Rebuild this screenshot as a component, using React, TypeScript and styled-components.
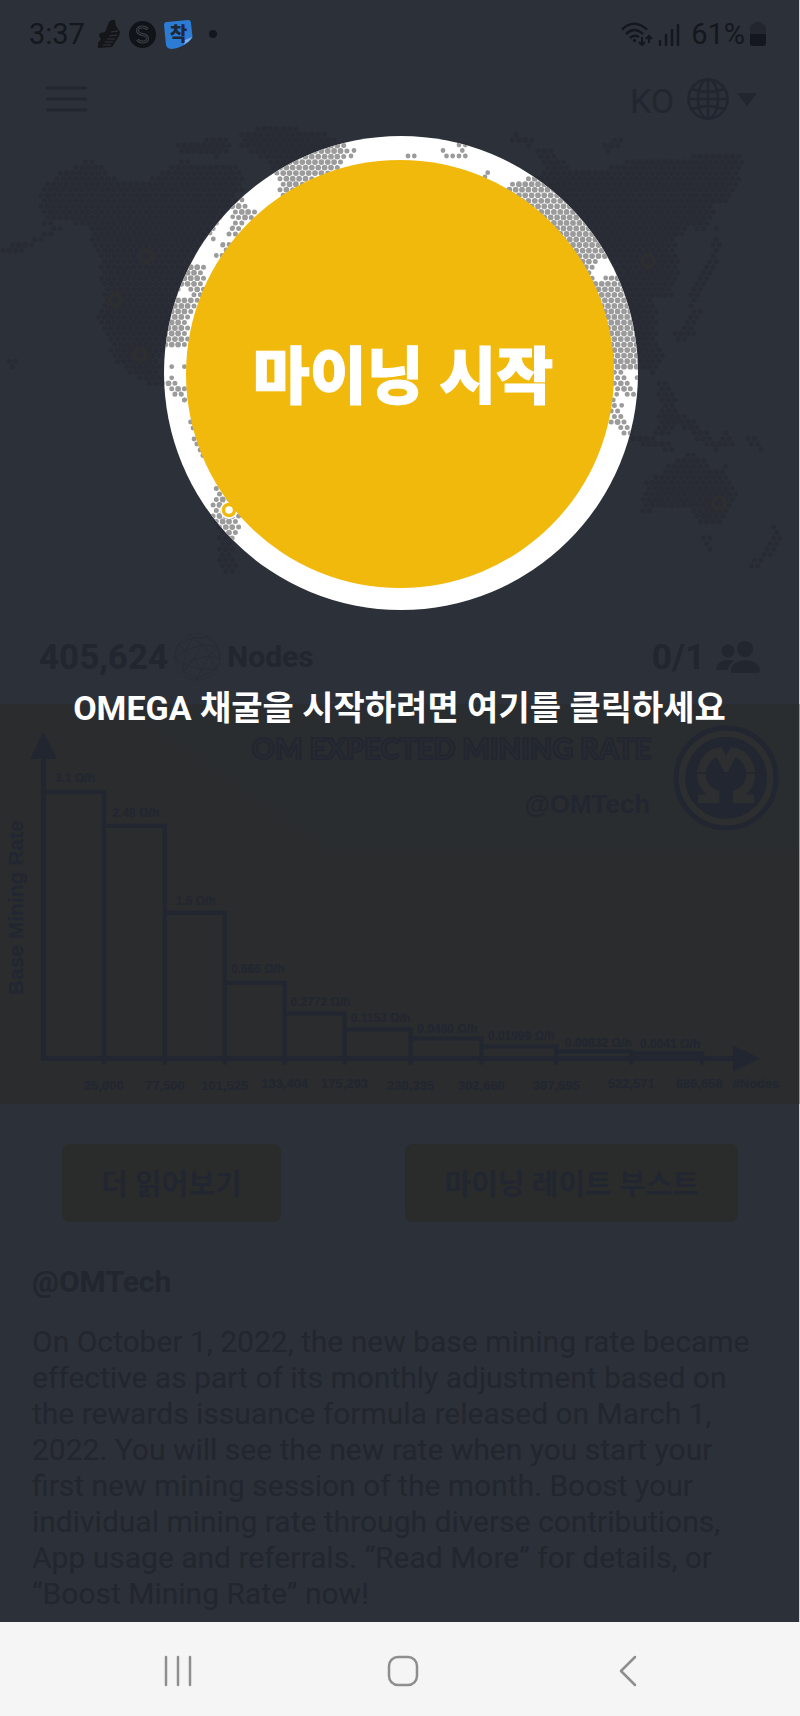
import React from "react";
import styled, { createGlobalStyle } from "styled-components";

const color = {
  page: "#2c3038",
  ink: "#22262e",
  navy: "#212631",
  status: "#14171d",
  mapDot: "#282b34",
  ringDot: "#9b9b9b",
  gold: "#f0b90b",
  panel: "#2a2d2f",
  buttonFill: "#2a2c2b",
  nav: "#f5f5f5",
  navIcon: "#8e8e8e",
};

const fonts = `Roboto, "Noto Sans CJK KR", sans-serif`;

const GlobalStyle = createGlobalStyle`
  *, *::before, *::after { box-sizing: border-box; }
  body { margin: 0; background: ${color.page}; font-family: ${fonts}; }
  button, select { font: inherit; color: inherit; border: 0; background: none; padding: 0; margin: 0; }
  svg { display: block; }
`;

const Page = styled.div`
  min-height: 100vh;
  display: flex;
  flex-direction: column;
  overflow-x: hidden;
  color: ${color.ink};
`;

const Content = styled.main`
  flex: 1;
  display: flex;
  flex-direction: column;
`;

const Section = styled.section<{ $edge?: string }>`
  border-right: 1px solid ${(p) => p.$edge ?? "#d4d5d7"};
`;

const StatusBar = styled(Section)`
  height: 68px;
  padding: 0 33px 0 29px;
  display: flex;
  align-items: center;
  justify-content: space-between;
  color: ${color.status};
  font-size: 29px;
  line-height: 32px;
`;

const StatusGroup = styled.div<{ $gap: number }>`
  display: flex;
  align-items: center;
  gap: ${(p) => p.$gap}px;
`;

const MoreNotifications = styled.span`
  padding-left: 8px;
`;

const Percent = styled.span`
  padding-left: 6px;
`;

const Header = styled(Section)`
  height: 62px;
  padding: 0 42px 0 46px;
  display: flex;
  align-items: center;
  justify-content: space-between;
`;

const IconButton = styled.button`
  display: flex;
  align-items: center;
  justify-content: center;
  cursor: pointer;
`;

const Language = styled.label`
  display: flex;
  align-items: center;
  gap: 8px;
  color: ${color.navy};
`;

const LanguageSelect = styled.select`
  appearance: none;
  width: 49px;
  padding-top: 4px;
  font-size: 34px;
  line-height: 40px;
  outline: none;
`;

const Hero = styled(Section)`
  display: grid;
  justify-items: center;
  align-items: center;
  height: 488px;
  > * { grid-area: 1 / 1; }
`;

const WorldMap = styled.svg`
  width: 800px;
  height: 488px;
  overflow: visible;
`;

const StartButton = styled.button`
  z-index: 1;
  width: 428px;
  height: 428px;
  padding: 8px 0 0 6px;
  border-radius: 50%;
  background: ${color.gold};
  color: #fff;
  font-size: 62px;
  line-height: 72px;
  font-weight: 900;
  -webkit-text-stroke: 1px #fff;
  cursor: pointer;
`;

const CityPin = styled.svg`
  z-index: 2;
  width: 800px;
  height: 488px;
  pointer-events: none;
`;

const Stats = styled(Section)`
  position: relative;
  height: 86px;
  padding: 0 39px 8px 39px;
  display: flex;
  align-items: center;
  justify-content: space-between;
  font-weight: 700;
`;

const StatGroup = styled.div<{ $gap: number }>`
  display: flex;
  align-items: center;
  gap: ${(p) => p.$gap}px;
`;

const StatValue = styled.span`
  padding-top: 2px;
  font-size: 35px;
  line-height: 40px;
`;

const StatLabel = styled.span`
  font-size: 30px;
  line-height: 36px;
`;

const Hint = styled.p`
  position: absolute;
  left: 0;
  right: 0;
  bottom: -26px;
  z-index: 2;
  margin: 0;
  text-align: center;
  white-space: nowrap;
  color: #fff;
  font-size: 34px;
  line-height: 44px;
  font-weight: 700;
`;

const ChartPanel = styled(Section)`
  background: ${color.panel};
`;

const Chart = styled.svg`
  width: 100%;
  height: auto;
  font-family: "Liberation Sans", sans-serif;
  font-weight: 700;
  font-size: 13px;
  fill: ${color.navy};
`;

const Actions = styled(Section)`
  display: flex;
  justify-content: space-between;
  padding: 40px 61px 0 62px;
`;

const ActionButton = styled.button`
  height: 78px;
  padding: 4px 39px 0;
  border-radius: 8px;
  background: ${color.buttonFill};
  font-size: 29px;
  line-height: 36px;
  font-weight: 700;
  color: ${color.navy};
  cursor: pointer;
`;

const Article = styled(Section)`
  flex: 1;
  padding: 42px 32px 0 32px;
  font-size: 30px;
  line-height: 36px;
`;

const Author = styled.h2`
  margin: 0 0 24px;
  font-size: 30px;
  line-height: 36px;
  font-weight: 700;
`;

const Body = styled.p`
  margin: 0;
`;

const NavBar = styled.nav`
  height: 94px;
  padding: 4px 60px 0 66px;
  display: grid;
  grid-template-columns: repeat(3, 1fr);
  background: ${color.nav};
  color: ${color.navIcon};
`;

/* ---- world map: land areas filled with a hexagonal grid of dots ---- */

type Point = [number, number];

const land: Point[][] = [
  [[0, 246], [30, 242], [55, 225], [62, 228], [45, 240], [25, 251], [0, 253]],
  [[40, 185], [62, 172], [88, 158], [100, 163], [118, 180], [145, 184], [155, 175], [185, 160], [205, 165], [235, 165], [245, 185], [235, 200],
    [250, 207], [256, 212], [245, 225], [236, 235], [226, 245], [206, 262], [203, 272], [206, 285], [198, 300], [192, 315], [188, 332], [188, 346],
    [163, 347], [160, 362], [164, 384], [150, 386], [128, 372], [112, 358], [108, 342], [95, 318], [104, 300], [100, 265], [90, 240], [90, 224],
    [60, 222], [42, 224], [40, 200]],
  [[240, 133], [262, 127], [285, 126], [320, 132], [350, 146], [345, 165], [322, 176], [300, 188], [284, 198], [278, 186], [276, 172], [262, 160], [240, 145]],
  [[172, 144], [200, 140], [225, 138], [232, 150], [215, 158], [195, 152], [178, 156]],
  [[163, 382], [172, 382], [187, 388], [187, 401], [180, 400]],
  [[214, 486], [222, 490], [236, 506], [242, 516], [238, 532], [232, 546], [238, 562], [236, 577], [222, 570], [216, 550], [219, 530], [212, 515]],
  [[8, 358], [17, 358], [16, 372], [10, 370]],
  [[510, 182], [522, 183], [528, 174], [540, 178], [545, 165], [535, 150], [550, 150], [565, 160], [570, 170], [600, 170], [630, 160], [655, 158],
    [690, 157], [700, 154], [742, 154], [742, 170], [735, 190], [730, 205], [716, 205], [705, 236], [690, 226], [675, 240], [680, 270], [672, 300],
    [655, 300], [658, 340], [664, 360], [654, 378], [640, 364], [637, 368], [612, 371], [500, 300], [490, 200]],
  [[508, 128], [516, 130], [520, 140], [535, 138], [532, 146], [514, 144]],
  [[602, 144], [615, 138], [630, 138], [618, 146], [608, 152]],
  [[716, 226], [722, 240], [718, 262], [708, 280], [700, 296], [690, 306], [688, 298], [704, 272], [712, 250]],
  [[690, 300], [702, 312], [694, 334], [682, 342], [672, 336], [688, 322]],
  [[612, 370], [624, 370], [630, 382], [639, 398], [627, 397], [622, 390], [612, 393]],
  [[611, 403], [618, 402], [624, 412], [632, 430], [634, 440], [624, 434], [610, 424]],
  [[658, 382], [668, 382], [680, 412], [700, 425], [716, 440], [730, 428], [736, 446], [716, 450], [696, 440], [680, 424], [664, 438], [652, 432], [660, 412]],
  [[630, 436], [655, 438], [680, 446], [676, 452], [646, 446]],
  [[742, 437], [760, 438], [768, 452], [758, 452]],
  [[640, 508], [646, 482], [668, 466], [686, 454], [704, 456], [716, 470], [726, 462], [732, 488], [738, 496], [728, 516], [714, 526], [700, 524],
    [690, 508], [665, 506], [645, 514]],
  [[702, 536], [714, 536], [712, 550], [706, 548]],
  [[774, 524], [784, 540], [768, 558], [750, 572], [752, 560], [768, 546]],
];

const water: Point[][] = [
  [[186, 268], [209, 234], [229, 209], [235, 214], [233, 220], [226, 240], [206, 264]],
  [[598, 262], [613, 260], [616, 274], [604, 281], [594, 276]],
  [[180, 288], [190, 288], [189, 302], [179, 298]],
];

// Single dots for islands and ragged coasts.
const islets: Point[] = [
  [171.7, 366.7], [184.4, 366.7], [171.7, 377.8], [168.5, 383.3], [175, 394], [181, 394], [184.8, 399.8], [190.5, 422], [193, 428], [194, 439],
  [196.8, 444], [200, 450], [202.8, 455.5], [210, 233], [213.3, 239], [223, 244.5], [229, 244.5], [226, 250], [216.3, 255.5], [222, 255.5],
  [232.7, 216.8], [232.7, 228], [238.7, 205.5], [242, 200], [354, 150.5], [351, 156],
  [408, 156], [414.3, 156], [443, 150.5], [446.5, 156], [452.7, 156], [459, 156], [465.3, 156], [462.3, 150.5], [459, 145], [465.3, 145],
  [487.7, 172.7], [485, 177], [605.7, 278], [612, 278], [637, 377.7], [616.7, 394.3], [613.3, 400], [621.7, 405.3],
];

function inside([x, y]: Point, shape: Point[]) {
  let hit = false;
  for (let i = 0, j = shape.length - 1; i < shape.length; j = i++) {
    const [xi, yi] = shape[i];
    const [xj, yj] = shape[j];
    if (yi > y !== yj > y && x < ((xj - xi) * (y - yi)) / (yj - yi) + xi) hit = !hit;
  }
  return hit;
}

const isLand = (p: Point) => land.some((s) => inside(p, s)) && !water.some((s) => inside(p, s));

const dot = (x: number, y: number, r: number) =>
  `M${(x - r).toFixed(1)} ${y.toFixed(1)}a${r} ${r} 0 1 0 ${2 * r} 0a${r} ${r} 0 1 0 ${-2 * r} 0`;

function buildMap() {
  const stepX = 6.37;
  const stepY = 5.53;
  let d = "";
  for (let row = -44; row < 40; row++) {
    const y = 366.7 + row * stepY;
    const shift = row % 2 === 0 ? 0 : stepX / 2;
    for (let col = -27; col < 98; col++) {
      const x = 171.7 + col * stepX + shift;
      if (!isLand([x, y])) continue;
      const coast = !isLand([x - stepX, y]) || !isLand([x + stepX, y]);
      d += dot(x, y, coast ? 2.5 : 2.9);
    }
  }
  islets.forEach(([x, y]) => (d += dot(x, y, 2.4)));
  return d;
}

const mapPath = buildMap();
const cities: Point[] = [[146, 256], [115, 300], [140, 355], [648, 261], [719, 503]];

const MapDrawing = () => (
  <WorldMap viewBox="0 130 800 488" aria-hidden="true">
    <defs>
      <clipPath id="ring"><circle cx="401" cy="373" r="237" /></clipPath>
    </defs>
    <path d={mapPath} fill={color.mapDot} />
    {cities.map(([x, y]) => (
      <circle key={x} cx={x} cy={y} r="6" fill="none" stroke="#2d2e30" strokeWidth="4" />
    ))}
    <circle cx="401" cy="373" r="237" fill="#fff" />
    <g clipPath="url(#ring)">
      <path d={mapPath} fill={color.ringDot} />
      <circle cx="229" cy="510" r="9" fill="#fff" />
    </g>
  </WorldMap>
);

/* ---- mining rate chart ---- */

const bars = [
  { x: 44, end: 104, top: 792, rate: "3.1 Ω/h", rx: 75, ry: 782, nodes: "25,000", ny: 1091 },
  { x: 104, end: 165, top: 826, rate: "2.48 Ω/h", rx: 136, ry: 817, nodes: "77,500", ny: 1091 },
  { x: 165, end: 225, top: 913, rate: "1.6 Ω/h", rx: 196, ry: 905, nodes: "101,525", ny: 1091 },
  { x: 225, end: 285, top: 983, rate: "0.666 Ω/h", rx: 258, ry: 973, nodes: "133,404", ny: 1089 },
  { x: 285, end: 345, top: 1014, rate: "0.2772 Ω/h", rx: 321, ry: 1006, nodes: "175,293", ny: 1089 },
  { x: 345, end: 411, top: 1030, rate: "0.1153 Ω/h", rx: 381, ry: 1022, nodes: "230,335", ny: 1091 },
  { x: 411, end: 482, top: 1039, rate: "0.0480 Ω/h", rx: 448, ry: 1033, nodes: "302,660", ny: 1091 },
  { x: 482, end: 557, top: 1047, rate: "0.01999 Ω/h", rx: 522, ry: 1040, nodes: "397,695", ny: 1091 },
  { x: 557, end: 632, top: 1052, rate: "0.00832 Ω/h", rx: 599, ry: 1047, nodes: "522,571", ny: 1089 },
  { x: 632, end: 703, top: 1054, rate: "0.0041 Ω/h", rx: 671, ry: 1048, nodes: "686,658", ny: 1089 },
];

const RateChart = () => (
  <Chart viewBox="0 704 800 401" role="img" aria-label="OM expected mining rate">
    <path d="M0 704H120L330 850H800V1105H0Z" fill="#292c2e" opacity="0.5" />
    <g fill="none" stroke={color.navy} strokeWidth="4">
      {bars.map((b) => (
        <path key={b.end} d={`M${b.x} ${b.top}H${b.end}V1065`} />
      ))}
      <path d="M43.5 755V1061" strokeWidth="5" />
      <path d="M41 1059H738" strokeWidth="5" />
    </g>
    <path d="M30 759L43.500 732L57 759ZM734 1046L761 1059L734 1072Z" />
    <g textAnchor="middle">
      {bars.map((b) => (
        <React.Fragment key={b.end}>
          <text x={b.rx} y={b.ry} fontSize="12">{b.rate}</text>
          <text x={b.end === 703 ? 700 : b.end} y={b.ny}>{b.nodes}</text>
        </React.Fragment>
      ))}
      <text x="757" y="1089">#Nodes</text>
      <text transform="translate(23 908) rotate(-90)" fontSize="21">Base Mining Rate</text>
    </g>
    <text x="652" y="759" textAnchor="end" fontFamily="Lato" fontWeight="900" fontSize="29" fill="#282b2f" stroke={color.navy} strokeWidth="2">
      OM EXPECTED MINING RATE
    </text>
    <text x="651" y="813" textAnchor="end" fontSize="26">@OMTech</text>
    <circle cx="727" cy="778" r="50" fill="#2c2e2f" stroke={color.navy} strokeWidth="5" />
    <circle cx="727" cy="778" r="41" />
    <g fill="none" stroke="#2c2e2f" strokeWidth="9">
      <path d="M699 799H716V794C703 789 700 777 704 766C707 758 713 753 720 752L727 766L734 752C741 753 747 758 750 766C754 777 751 789 738 794V799H755" />
    </g>
    <path d="M697 773H757" stroke={color.navy} strokeWidth="2" />
  </Chart>
);

/* ---- icons ---- */

const ShoeIcon = () => (
  <svg width="24" height="30" viewBox="0 0 24 30" aria-hidden="true">
    <path d="M12 3Q15 0 18 1L19 7L23 13L22 17L15 28L1 29L1 24L4 20L2 17L3 14L8 13Z" fill="#15161a" />
    <path d="M14 13L21 12M12 17L20 16M10 20L18 20M8 23L16 23M6 26L14 26" stroke="#30333a" strokeWidth="1" />
  </svg>
);

const coinStroke =
  "M18.500 8.500Q17 6 13.500 6Q8.500 6 8.500 9.500Q8.500 12.500 13.500 13.500Q18.500 14.500 18.500 17.500Q18.500 21 13.500 21Q10 21 8.500 18.500";

const CoinIcon = () => (
  <svg width="27" height="27" viewBox="0 0 27 27" fill="none" aria-hidden="true">
    <circle cx="13.500" cy="13.500" r="13.500" fill="#101318" />
    <path d={coinStroke} stroke="#3a3e46" strokeWidth="3" />
    <path d={coinStroke} stroke="#15181d" strokeWidth="1" />
  </svg>
);

const StickerIcon = () => (
  <svg width="29" height="29" viewBox="0 0 29 29" aria-hidden="true">
    <path d="M3 2L24 0Q27 0 27 3L28.500 17Q22 27 8 29Q3 29 2 25L0 5Q0 2 3 2Z" fill="#2c7cd6" />
    <path d="M28.500 17L21 20L20 24.500Q26 21 28.500 17Z" fill="#7fb2ea" />
    <text x="14.500" y="21" textAnchor="middle" fontFamily="Noto Sans CJK KR" fontWeight="900" fontSize="19" fill="#1d2938">착</text>
  </svg>
);

const MoreDot = () => (
  <svg width="8" height="8" viewBox="0 0 8 8" aria-hidden="true"><circle cx="4" cy="4" r="4" fill="currentColor" /></svg>
);

const WifiIcon = () => (
  <svg width="32" height="24" viewBox="0 0 32 24" aria-hidden="true" fill="none" stroke="currentColor" strokeWidth="2.500">
    <path d="M1 7.500Q13 -4 26 7.500M5 12Q13 4 22 12M9 16Q13 12 18 15" />
    <circle cx="13.500" cy="18.500" r="1.700" fill="currentColor" stroke="none" />
    <path d="M21 15V23M18 20L21 23L24 20M28 21V14M25 17L28 14L31 17" strokeWidth="2" />
  </svg>
);

const SignalIcon = () => (
  <svg width="22" height="23" viewBox="0 0 22 23" aria-hidden="true">
    <path d="M2 18V22M8 12V22M14 7V22M20 2V22" stroke="currentColor" strokeWidth="2.500" strokeLinecap="round" />
  </svg>
);

const BatteryIcon = () => (
  <svg width="16" height="24" viewBox="0 0 16 24" aria-hidden="true">
    <path d="M4 2Q4 0 6 0H10Q12 0 12 2Q16 2 16 6V12H0V6Q0 2 4 2Z" fill="#23262d" />
    <path d="M0 12H16V21Q16 24 13 24H3Q0 24 0 21Z" fill="currentColor" />
  </svg>
);

const MenuIcon = () => (
  <svg width="41" height="26" viewBox="0 0 41 26" aria-hidden="true">
    <path d="M0 2H41M0 13H41M0 24H41" stroke={color.navy} strokeWidth="3" />
  </svg>
);

const GlobeIcon = () => (
  <svg width="42" height="42" viewBox="0 0 42 42" fill="none" stroke="currentColor" strokeWidth="2.500" aria-hidden="true">
    <circle cx="21" cy="21" r="19.500" />
    <ellipse cx="21" cy="21" rx="10" ry="19.500" />
    <path d="M21 2V40M2 21H40M5 11Q21 17 37 11M5 31Q21 25 37 31" />
  </svg>
);

const CaretIcon = () => (
  <svg width="20" height="13" viewBox="0 0 20 13" aria-hidden="true"><path d="M0 0H20L10 13Z" fill="currentColor" /></svg>
);

const NetworkIcon = () => (
  <svg width="49" height="50" viewBox="0 0 51 50" fill="none" stroke="#282c34" strokeWidth="1" aria-hidden="true">
    <circle cx="25.500" cy="25" r="24" strokeDasharray="4 2" />
    <path d="M5 12L20 5L37 5L46 14L30 12L20 5L13 18L30 12L38 24L46 14L49 28L38 24L22 27L13 18L2 25L11 33L22 27L30 38L38 24L44 38L30 38L24 48L11 40L11 33L30 38M5 12L13 18L11 33M24 48L44 38L49 28L30 12L22 27L11 40L2 25L5 12" />
  </svg>
);

const PeopleIcon = () => (
  <svg width="44" height="33" viewBox="0 0 44 33" fill={color.ink} aria-hidden="true">
    <circle cx="12" cy="10" r="6.500" />
    <circle cx="29" cy="8" r="8" />
    <path d="M15 32Q14 20 29 19.500Q43 20 44 29Q44 32 41 32ZM0 28Q1 19 13 19Q16 19 18 20Q13 23 12 29H3Q0 29 0 28Z" />
  </svg>
);

export default function App() {
  return (
    <Page>
      <GlobalStyle />
      <Content>
        <StatusBar as="header">
          <StatusGroup $gap={12}>
            <span>3:37</span>
            <StatusGroup $gap={8}>
              <ShoeIcon />
              <CoinIcon />
              <StickerIcon />
              <MoreNotifications><MoreDot /></MoreNotifications>
            </StatusGroup>
          </StatusGroup>
          <StatusGroup $gap={5}>
            <WifiIcon />
            <SignalIcon />
            <Percent>61%</Percent>
            <BatteryIcon />
          </StatusGroup>
        </StatusBar>

        <Header>
          <IconButton type="button" aria-label="메뉴"><MenuIcon /></IconButton>
          <Language>
            <LanguageSelect aria-label="언어" defaultValue="ko">
              <option value="ko">KO</option>
              <option value="en">EN</option>
            </LanguageSelect>
            <GlobeIcon />
            <CaretIcon />
          </Language>
        </Header>

        <Hero>
          <MapDrawing />
          <StartButton type="button">마이닝 시작</StartButton>
          <CityPin viewBox="0 130 800 488" aria-hidden="true">
            <circle cx="229" cy="510" r="5.500" fill="#fff" stroke={color.gold} strokeWidth="3.500" />
          </CityPin>
        </Hero>

        <Stats>
          <StatGroup $gap={5}>
            <StatValue>405,624</StatValue>
            <NetworkIcon />
            <StatLabel>Nodes</StatLabel>
          </StatGroup>
          <StatGroup $gap={11}>
            <StatValue>0/1</StatValue>
            <PeopleIcon />
          </StatGroup>
          <Hint>OMEGA 채굴을 시작하려면 여기를 클릭하세요</Hint>
        </Stats>

        <ChartPanel $edge="#c79a35">
          <RateChart />
        </ChartPanel>

        <Actions>
          <ActionButton type="button">더 읽어보기</ActionButton>
          <ActionButton type="button">마이닝 레이트 부스트</ActionButton>
        </Actions>

        <Article>
          <Author>@OMTech</Author>
          <Body>
            On October 1, 2022, the new base mining rate became effective as part of its monthly adjustment based on the
            rewards issuance formula released on March 1, 2022. You will see the new rate when you start your first new
            mining session of the month. Boost your individual mining rate through diverse contributions, App usage and
            referrals. “Read More” for details, or “Boost Mining Rate” now!
          </Body>
        </Article>
      </Content>

      <NavBar>
        <IconButton type="button" aria-label="최근 앱">
          <svg width="28" height="32" viewBox="0 0 28 32" fill="none" stroke="currentColor" strokeWidth="2.500" strokeLinecap="round">
            <path d="M2 2V30M14 2V30M26 2V30" />
          </svg>
        </IconButton>
        <IconButton type="button" aria-label="홈">
          <svg width="32" height="32" viewBox="0 0 32 32" fill="none" stroke="currentColor" strokeWidth="2.500">
            <rect x="2" y="2" width="28" height="28" rx="9" />
          </svg>
        </IconButton>
        <IconButton type="button" aria-label="뒤로">
          <svg width="18" height="32" viewBox="0 0 18 32" fill="none" stroke="currentColor" strokeWidth="2.500" strokeLinecap="round" strokeLinejoin="round">
            <path d="M16 2L2 16L16 30" />
          </svg>
        </IconButton>
      </NavBar>
    </Page>
  );
}
